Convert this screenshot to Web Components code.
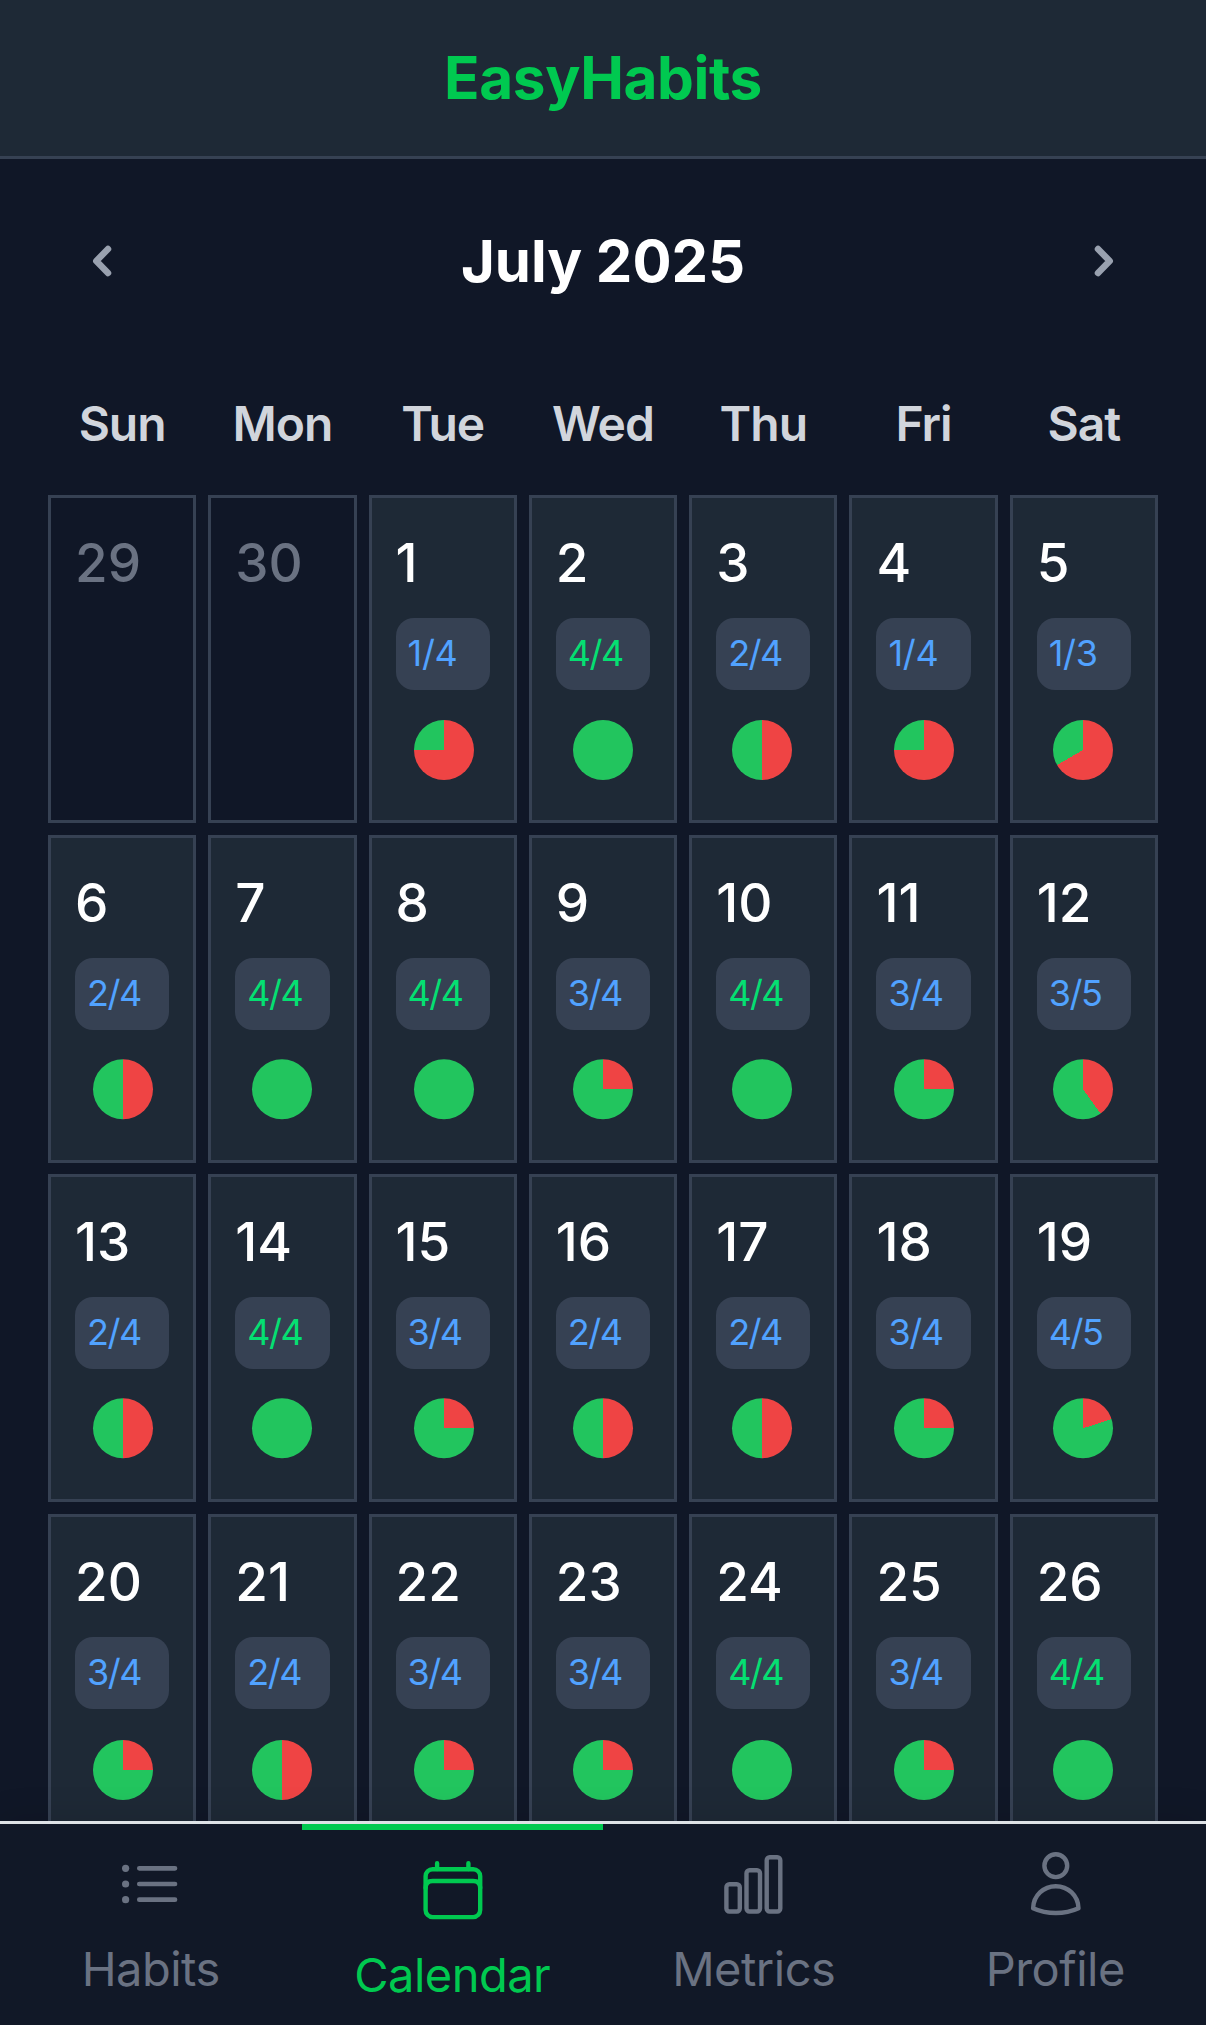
<!DOCTYPE html>
<html lang="en">
<head>
<meta charset="utf-8">
<title>EasyHabits</title>
<style>
html,body{margin:0;background:#101727;font-family:Inter,"Liberation Sans",sans-serif}
</style>
</head>
<body>
<habit-app></habit-app>
<script>
const define=(name,css,html)=>customElements.define(name,class extends HTMLElement{
  connectedCallback(){
    if(this.shadowRoot)return;
    const get=k=>this.getAttribute(k);
    this.attachShadow({mode:'open'}).innerHTML=`<style>*{box-sizing:border-box}${css}</style>`+html(get);
  }
});

define('app-header',`
:host{display:block;height:159px;flex:none;background:#1e2936;border-bottom:3px solid #364153;box-sizing:border-box;text-align:center}
h1{margin:0;padding-top:38px;font-size:58.5px;line-height:80px;font-weight:700;color:#00c950;letter-spacing:-.4px}
`,()=>`<h1><slot></slot></h1>`);

define('month-bar',`
:host{display:flex;justify-content:space-between;align-items:center;height:84px;padding:0 12px;box-sizing:border-box}
h2{margin:0;font-size:58px;line-height:84px;font-weight:700;color:#fff}
svg{width:84px;height:84px;stroke:#99a1af;stroke-width:6.5;fill:none;stroke-linecap:round;stroke-linejoin:round;display:block}
`,()=>`<svg viewBox="0 0 84 84"><path d="M48 30 36.300 42 48 54"/></svg><h2><slot></slot></h2><svg viewBox="0 0 84 84"><path d="M36 30 47.700 42 36 54"/></svg>`);

define('week-days',`
:host{display:grid;grid-template-columns:repeat(7,1fr);gap:12px}
span{text-align:center;font-size:48px;line-height:60px;font-weight:600;color:#d1d5dc;letter-spacing:-1px}
`,()=>['Sun','Mon','Tue','Wed','Thu','Fri','Sat'].map(d=>`<span>${d}</span>`).join(''));

define('pie-dot',`
:host{display:block;width:60px;height:60px}
div{width:60px;height:60px;border-radius:50%}
`,g=>{const a=360*(1-g('value'));return `<div style="background:conic-gradient(#ef4444 ${a}deg,#22c55e ${a}deg)"></div>`});

define('day-cell',`
:host{display:flex;flex-direction:column;height:328px;border:3px solid #364153;background:#1e2936;padding:24px;box-sizing:border-box;color:#fff}
:host([muted]){background:#101727;color:#6a7282}
.num{font-size:53px;line-height:82px;height:84px;white-space:nowrap;font-weight:500}
.badge{margin-top:12px;height:72px;border-radius:18px;background:#364153;padding:0 12px;font-size:36px;line-height:70px;color:#51a2ff;letter-spacing:-1.5px}
.badge.one{letter-spacing:-.3px}
.badge.full{color:#05df72}
pie-dot{margin:30px auto 0;transform:translate(var(--dx,0),var(--dy,0))}
`,g=>{
  const c=g('count');
  if(!c)return `<div class="num">${g('day')}</div>`;
  const [a,b]=c.split('/');
  return `<div class="num">${g('day')}</div><div class="badge${a===b?' full':''}${a==='1'?' one':''}">${c}</div><pie-dot value="${a/b}"></pie-dot>`;
});

define('month-grid',`
:host{display:grid;grid-template-columns:repeat(7,1fr);grid-auto-rows:328px;row-gap:11.670px;column-gap:12px}
day-cell:nth-of-type(7n+1),day-cell:nth-of-type(7n+3){--dx:1px}
day-cell:nth-of-type(7n+5),day-cell:nth-of-type(7n){--dx:-1px}
day-cell:nth-of-type(n+8){--dy:-.7px}
day-cell:nth-of-type(n+22){--dy:1px}
`,()=>{
  const counts='1/4 4/4 2/4 1/4 1/3 2/4 4/4 4/4 3/4 4/4 3/4 3/5 2/4 4/4 3/4 2/4 2/4 3/4 4/5 3/4 2/4 3/4 3/4 4/4 3/4 4/4'.split(' ');
  return '<day-cell day="29" muted></day-cell><day-cell day="30" muted></day-cell>'+counts.map((c,i)=>`<day-cell day="${i+1}" count="${c}"></day-cell>`).join('');
});

const icons={
  list:'<g stroke-width="4.700"><path d="M23.300 20.300H59M23.300 36H59M23.300 51.700H59"/></g><g fill="currentColor" stroke="none"><circle cx="9.600" cy="20.300" r="3.600"/><circle cx="9.600" cy="36" r="3.600"/><circle cx="9.600" cy="51.700" r="3.600"/></g>',
  calendar:'<rect x="8.600" y="15.200" width="54.600" height="47.900" rx="7"/><path d="M8.600 34Q8.600 27 15.600 27H56.200Q63.200 27 63.200 34M20.100 15V9.200M51.400 15V9.200"/>',
  bars:'<rect x="7.400" y="36.200" width="13.400" height="27.300" rx="3"/><rect x="27.500" y="22.200" width="13.500" height="41.300" rx="3"/><rect x="47.700" y="9.200" width="13.600" height="54.300" rx="3"/>',
  person:'<circle cx="35.800" cy="17.700" r="11.400"/><path d="M13.100 60.200C13.500 47.500 23.500 38.200 35.800 38.200S58.100 47.500 58.500 60.200C51.500 63.400 43.800 65 35.800 65S20.100 63.400 13.100 60.200Z"/>'
};
define('tab-item',`
:host{display:flex;flex-direction:column;align-items:center;flex:1;padding-top:24px;box-sizing:border-box;color:#6a7282}
:host([active]){color:#00c950;border-top:6px solid #00c950}
svg{width:70px;height:70px;display:block;fill:none;stroke:currentColor;stroke-width:4.400;stroke-linecap:round;stroke-linejoin:round}
span{font-size:47px;line-height:60px;margin-top:21px;letter-spacing:-.5px}
`,g=>`<svg viewBox="0 0 70 70">${icons[g('icon')]}</svg><span><slot></slot></span>`);

define('tab-bar',`
:host{display:flex;flex:none;height:204px;background:#111827;border-top:3px solid #dee2e6;box-sizing:border-box;box-shadow:0 -6px 30px rgba(0,0,0,.1);position:relative}
`,()=>`<slot></slot>`);

define('habit-app',`
:host{display:flex;flex-direction:column;height:2025px;width:1206px;overflow:hidden}
main{flex:1;min-height:0;overflow:hidden;padding:60px 48px 0}
week-days{margin:91px 0 41px}
`,()=>`<app-header>EasyHabits</app-header>
<main><month-bar>July 2025</month-bar><week-days></week-days><month-grid></month-grid></main>
<tab-bar><tab-item icon="list">Habits</tab-item><tab-item icon="calendar" active>Calendar</tab-item><tab-item icon="bars">Metrics</tab-item><tab-item icon="person">Profile</tab-item></tab-bar>`);
</script>
</body>
</html>
